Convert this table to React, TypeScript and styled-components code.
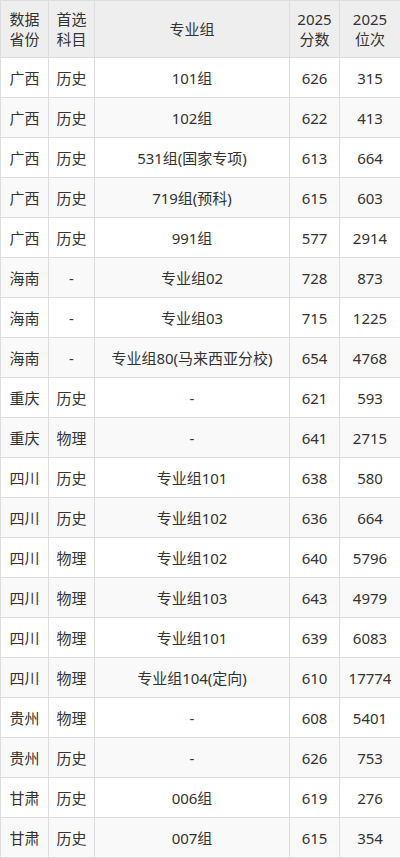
import React from "react";
import styled, { createGlobalStyle } from "styled-components";

const Global = createGlobalStyle`
  html, body {
    margin: 0;
    padding: 0;
    background: #ffffff;
  }
  body {
    font-family: "Noto Sans", "Noto Sans CJK SC", sans-serif;
    color: #333333;
  }
`;

type Row = {
  province: string;
  subject: string;
  group: string;
  score: string;
  rank: string;
};

const rows: Row[] = [
  { province: "广西", subject: "历史", group: "101组", score: "626", rank: "315" },
  { province: "广西", subject: "历史", group: "102组", score: "622", rank: "413" },
  { province: "广西", subject: "历史", group: "531组(国家专项)", score: "613", rank: "664" },
  { province: "广西", subject: "历史", group: "719组(预科)", score: "615", rank: "603" },
  { province: "广西", subject: "历史", group: "991组", score: "577", rank: "2914" },
  { province: "海南", subject: "-", group: "专业组02", score: "728", rank: "873" },
  { province: "海南", subject: "-", group: "专业组03", score: "715", rank: "1225" },
  { province: "海南", subject: "-", group: "专业组80(马来西亚分校)", score: "654", rank: "4768" },
  { province: "重庆", subject: "历史", group: "-", score: "621", rank: "593" },
  { province: "重庆", subject: "物理", group: "-", score: "641", rank: "2715" },
  { province: "四川", subject: "历史", group: "专业组101", score: "638", rank: "580" },
  { province: "四川", subject: "历史", group: "专业组102", score: "636", rank: "664" },
  { province: "四川", subject: "物理", group: "专业组102", score: "640", rank: "5796" },
  { province: "四川", subject: "物理", group: "专业组103", score: "643", rank: "4979" },
  { province: "四川", subject: "物理", group: "专业组101", score: "639", rank: "6083" },
  { province: "四川", subject: "物理", group: "专业组104(定向)", score: "610", rank: "17774" },
  { province: "贵州", subject: "物理", group: "-", score: "608", rank: "5401" },
  { province: "贵州", subject: "历史", group: "-", score: "626", rank: "753" },
  { province: "甘肃", subject: "历史", group: "006组", score: "619", rank: "276" },
  { province: "甘肃", subject: "历史", group: "007组", score: "615", rank: "354" },
];

const S = {
  Table: styled.table`
    width: 400px;
    border-collapse: collapse;
    table-layout: fixed;
    font-size: 15px;
    line-height: 18px;
  `,
  HeadRow: styled.tr`
    height: 57px;
    background: #eeeeee;
  `,
  Row: styled.tr<{ $shade: boolean }>`
    height: 40px;
    background: ${({ $shade }) => ($shade ? "#f9f9f9" : "#ffffff")};
  `,
  Th: styled.th`
    border: 1px solid #dddddd;
    font-weight: normal;
    line-height: 20px;
    text-align: center;
    vertical-align: middle;
    padding: 0 2px;
    color: #333333;
  `,
  Td: styled.td`
    border: 1px solid #dddddd;
    text-align: center;
    vertical-align: middle;
    padding: 0 2px;
    white-space: nowrap;
    color: #333333;
  `,
};

const App: React.FC = () => {
  return (
    <>
      <Global />
      <S.Table>
        <colgroup>
          <col style={{ width: 48 }} />
          <col style={{ width: 46 }} />
          <col style={{ width: 195 }} />
          <col style={{ width: 50 }} />
          <col style={{ width: 61 }} />
        </colgroup>
        <thead>
          <S.HeadRow>
            <S.Th>
              数据
              <br />
              省份
            </S.Th>
            <S.Th>
              首选
              <br />
              科目
            </S.Th>
            <S.Th>专业组</S.Th>
            <S.Th>
              2025
              <br />
              分数
            </S.Th>
            <S.Th>
              2025
              <br />
              位次
            </S.Th>
          </S.HeadRow>
        </thead>
        <tbody>
          {rows.map((r, i) => (
            <S.Row key={i} $shade={i % 2 === 1}>
              <S.Td>{r.province}</S.Td>
              <S.Td>{r.subject}</S.Td>
              <S.Td>{r.group}</S.Td>
              <S.Td>{r.score}</S.Td>
              <S.Td>{r.rank}</S.Td>
            </S.Row>
          ))}
        </tbody>
      </S.Table>
    </>
  );
};

export default App;
